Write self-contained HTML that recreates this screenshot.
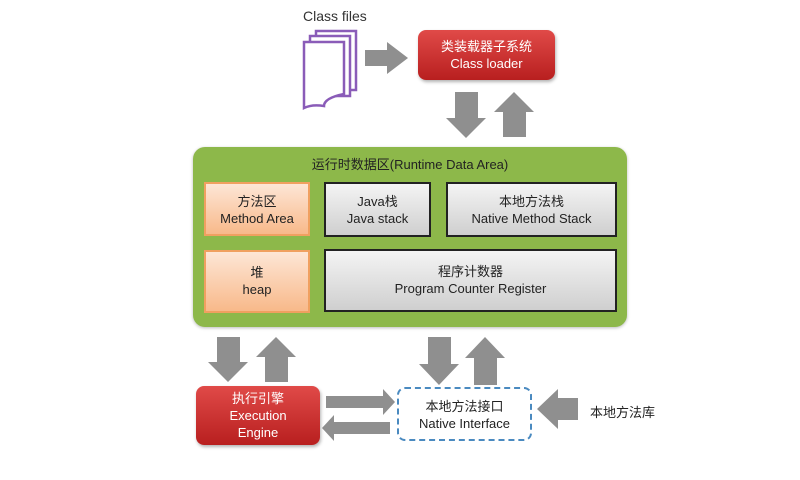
<!DOCTYPE html>
<html><head><meta charset="utf-8"><style>
body{margin:0;width:800px;height:480px;background:#fff;position:relative;overflow:hidden;font-family:"Liberation Sans","Noto Sans CJK SC",sans-serif;}
.a{position:absolute}
.red{background:linear-gradient(#e04a48,#b81f1f);border-radius:8px;color:#fff;text-align:center;font-size:13px;line-height:17px;box-shadow:1px 2px 3px rgba(0,0,0,.3)}
.or{background:linear-gradient(#fde6d6,#f8b98a);border:2px solid #f0a060;box-sizing:border-box;text-align:center;font-size:13px;line-height:17px;color:#222}
.gr{background:linear-gradient(#f4f4f4,#cfcfcf);border:2px solid #222;box-sizing:border-box;text-align:center;font-size:13px;line-height:17px;color:#222}
</style></head><body>
<div class="a" style="left:303px;top:8px;font-size:14px;color:#333">Class files</div>
<svg class="a" style="left:300px;top:28px" width="64" height="82" viewBox="0 0 64 82">
<g fill="#fff" stroke="#8a5cb8" stroke-width="2.5">
<path d="M16 3H56V62H16Z"/><path d="M10 8H50V68H10Z"/>
<path d="M4 14H44V66Q24 70 24 78Q12 76 4 80Z"/></g></svg>
<svg class="a" style="left:0;top:0" width="800" height="480">
<g fill="#8f8f8f">
<path d="M365 50H387V42L408 58L387 74V66H365Z"/>
<path d="M455 92H478V118H486L466 138L446 118H455Z"/>
<path d="M503 137H526V112H534L514 92L494 112H503Z"/>
<path d="M217 337H240V362H248L228 382L208 362H217Z"/>
<path d="M265 382H288V357H296L276 337L256 357H265Z"/>
<path d="M428 337H451V364H459L439 385L419 364H428Z"/>
<path d="M474 385H497V358H505L485 337L465 358H474Z"/>
<path d="M326 396H383V389L395 402L383 415V408H326Z"/>
<path d="M390 422H334V415L322 428L334 441V434H390Z"/>
<path d="M578 398H558V389L537 409L558 429V420H578Z"/>
</g></svg>
<div class="a red" style="left:418px;top:30px;width:137px;height:50px;padding-top:8px;box-sizing:border-box">类装载器子系统<br>Class loader</div>
<div class="a" style="left:193px;top:147px;width:434px;height:180px;background:#8db84a;border-radius:12px;box-shadow:0 1px 3px #bbb"></div>
<div class="a" style="left:193px;top:154px;width:434px;text-align:center;font-size:13px;color:#222">运行时数据区(Runtime Data Area)</div>
<div class="a or" style="left:204px;top:182px;width:106px;height:54px;padding-top:9px">方法区<br>Method Area</div>
<div class="a gr" style="left:324px;top:182px;width:107px;height:55px;padding-top:9px">Java栈<br>Java stack</div>
<div class="a gr" style="left:446px;top:182px;width:171px;height:55px;padding-top:9px">本地方法栈<br>Native Method Stack</div>
<div class="a or" style="left:204px;top:250px;width:106px;height:63px;padding-top:12px">堆<br>heap</div>
<div class="a gr" style="left:324px;top:249px;width:293px;height:63px;padding-top:12px">程序计数器<br>Program Counter Register</div>
<div class="a red" style="left:196px;top:386px;width:124px;height:59px;padding-top:4px;box-sizing:border-box">执行引擎<br>Execution<br>Engine</div>
<div class="a" style="left:397px;top:387px;width:135px;height:54px;border:2px dashed #4a8ac0;border-radius:8px;box-sizing:border-box;text-align:center;font-size:13px;line-height:17px;padding-top:9px;color:#222">本地方法接口<br>Native Interface</div>
<div class="a" style="left:590px;top:402px;font-size:13px;color:#222">本地方法库</div>
</body></html>
